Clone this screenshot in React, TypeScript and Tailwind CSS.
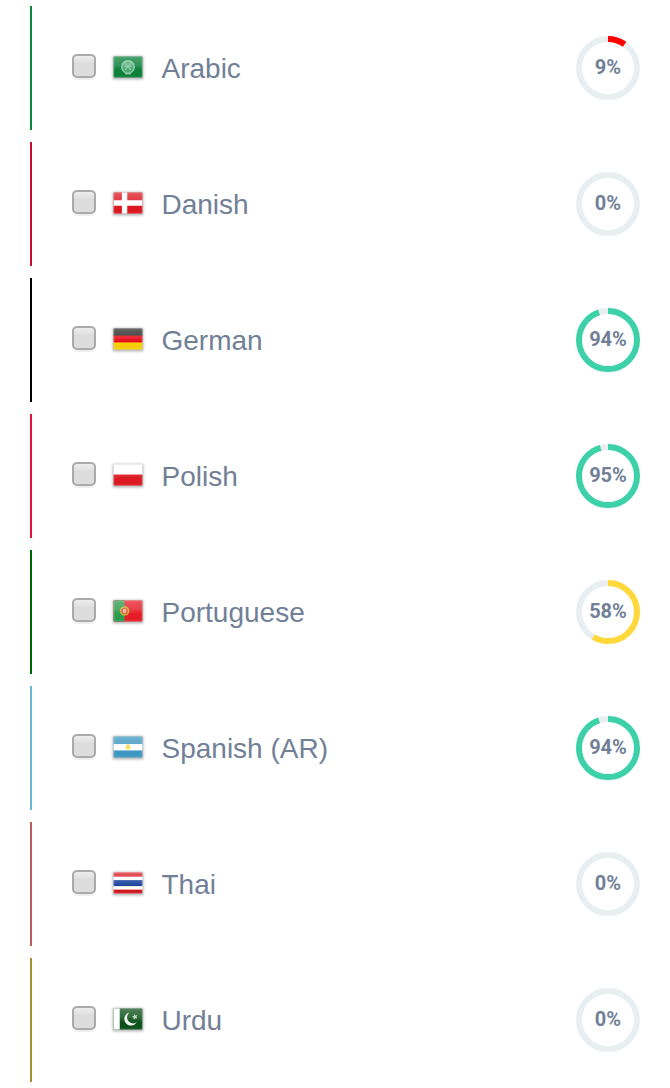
import type { ReactNode } from "react";

type Language = {
  name: string;
  percent: number;
  arc: number;
  border: string;
  stroke: string;
  flag: ReactNode;
};

const languages: Language[] = [
  {
    name: "Arabic", percent: 9, arc: 9.7, border: "border-[#078840]", stroke: "stroke-[#ff0000]",
    flag: (
      <>
        <rect width="30" height="22" fill="#0a803a" />
        <circle cx="15" cy="11" r="6.3" fill="#4ca872" stroke="#82c49a" strokeWidth="1.7" />
        <path d="M12 7l6 7M18 7l-6 7M12 10q3 2 6 0" fill="none" stroke="#8bc9a2" strokeWidth="1.1" />
        <path d="M12 18h6" stroke="#8fc9a4" strokeWidth="1.5" />
      </>
    ),
  },
  {
    name: "Danish", percent: 0, arc: 0, border: "border-[#c60c30]", stroke: "stroke-[#ff0000]",
    flag: (
      <>
        <rect width="30" height="22" fill="#dc1720" />
        <path d="M11.5 0v22M0 11h30" stroke="#fff" strokeWidth="5.5" />
      </>
    ),
  },
  {
    name: "German", percent: 94, arc: 95, border: "border-black", stroke: "stroke-[#3dd1aa]",
    flag: (
      <>
        <rect width="30" height="8" fill="#292929" />
        <rect y="7.5" width="30" height="7.5" fill="#e50712" />
        <rect y="14.5" width="30" height="7.5" fill="#f5ce08" />
      </>
    ),
  },
  {
    name: "Polish", percent: 95, arc: 95.9, border: "border-[#dc143c]", stroke: "stroke-[#3dd1aa]",
    flag: (
      <>
        <rect width="30" height="11" fill="#fff" />
        <rect y="10.5" width="30" height="11.5" fill="#dc1920" />
      </>
    ),
  },
  {
    name: "Portuguese", percent: 58, arc: 58.5, border: "border-[#006600]", stroke: "stroke-[#ffd93b]",
    flag: (
      <>
        <rect width="30" height="22" fill="#e61c26" />
        <rect width="11.5" height="22" fill="#2b9b4d" />
        <circle cx="11.5" cy="11" r="4.2" fill="#df5930" stroke="#c0ae35" strokeWidth="1.6" />
        <rect x="9.8" y="9" width="3.4" height="4.2" rx="1" fill="#f4a99a" />
      </>
    ),
  },
  {
    name: "Spanish (AR)", percent: 94, arc: 95, border: "border-[#6cb6d6]", stroke: "stroke-[#3dd1aa]",
    flag: (
      <>
        <rect width="30" height="22" fill="#3e98c2" />
        <rect y="8" width="30" height="6.5" fill="#fff" />
        <path d="M15 8v6M12 11h6M13 9l4 4M17 9l-4 4" stroke="#f9df58" strokeWidth="1.2" />
        <circle cx="15" cy="11" r="2" fill="#f8dc42" />
      </>
    ),
  },
  {
    name: "Thai", percent: 0, arc: 0, border: "border-[#b95d5d]", stroke: "stroke-[#ff0000]",
    flag: (
      <>
        <rect width="30" height="22" fill="#fff" />
        <rect width="30" height="4.5" fill="#dc1720" />
        <rect y="8" width="30" height="6.2" fill="#173f9c" />
        <rect y="17.8" width="30" height="4.2" fill="#cf1720" />
      </>
    ),
  },
  {
    name: "Urdu", percent: 0, arc: 0, border: "border-[#a5912b]", stroke: "stroke-[#ff0000]",
    flag: (
      <>
        <rect width="30" height="22" fill="#0c5119" />
        <rect width="6.5" height="22" fill="#fff" />
        <path d="M16.5 4.2A6.9 6.9 0 1 0 24.2 14.2A5.3 5.3 0 1 1 16.5 4.2Z" fill="#edf3ee" />
        <path d="M21.5 5.5l1 1.8 2.2-.5-1 2 1 1.8-2.2-.3-1.5 1.5-.2-2.2-1.9-.8 2-1Z" fill="#b5ceb9" />
      </>
    ),
  },
];

function Flag({ id, children }: { id: string; children: ReactNode }) {
  return (
    <svg viewBox="0 0 38 38" className="-mx-[3px] -mt-0.5 h-[38px] w-[38px] shrink-0">
      <defs>
        <linearGradient id={`${id}-gloss`} x2="0" y2="1">
          <stop offset="0" stopColor="#fff" stopOpacity=".26" />
          <stop offset=".4" stopColor="#fff" stopOpacity=".16" />
          <stop offset=".65" stopColor="#fff" stopOpacity="0" />
        </linearGradient>
        <clipPath id={`${id}-clip`}><rect width="30" height="22" rx="1.5" /></clipPath>
        <filter id={`${id}-soft`} x="-20%" y="-20%" width="140%" height="140%"><feGaussianBlur stdDeviation="1.3" /></filter>
        <filter id={`${id}-smooth`} x="-10%" y="-10%" width="120%" height="120%" colorInterpolationFilters="sRGB"><feGaussianBlur stdDeviation=".65" /></filter>
      </defs>
      <rect x="3.5" y="8" width="31" height="23.5" rx="1" fill="#000" opacity=".27" filter={`url(#${id}-soft)`} />
      <g transform="translate(4.4 8.3) scale(.973)" filter={`url(#${id}-smooth)`}>
        <g clipPath={`url(#${id}-clip)`}>
          {children}
          <rect width="30" height="22" fill={`url(#${id}-gloss)`} />
          <rect x=".8" y=".8" width="28.4" height="20.4" fill="none" stroke="#fff" strokeOpacity=".12" />
        </g>
      </g>
    </svg>
  );
}

function Progress({ value, arc, stroke }: { value: number; arc: number; stroke: string }) {
  return (
    <div className="grid h-16 w-16 place-items-center">
      <svg viewBox="0 0 64 64" className="col-start-1 row-start-1 h-16 w-16 -rotate-90" fill="none">
        <circle cx="32" cy="32" r="29" className="stroke-[#e9eff1]" strokeWidth="6" />
        {arc > 0 && (
          <circle cx="32" cy="32" r="29" pathLength="100" className={stroke} strokeWidth="6" strokeDasharray={`${arc} 100`} />
        )}
      </svg>
      <span className="col-start-1 row-start-1 -mt-0.5 font-[Roboto,sans-serif] text-xl leading-6 font-bold text-[#718096]">
        {value}%
      </span>
    </div>
  );
}

export default function App() {
  return (
    <main className="flex h-[1088px] w-[670px] flex-col gap-3 bg-white px-[30px] py-1.5">
      {languages.map(({ name, percent, arc, border, stroke, flag }) => (
        <div key={name} className={`flex h-[124px] shrink-0 items-center justify-between border-l-2 pl-10 ${border}`}>
          <label className="flex items-center">
            <input
              type="checkbox"
              className="-mt-1 mr-4 h-6 w-6 shrink-0 appearance-none rounded-[5px] border-2 border-[#aaaaaa] bg-linear-to-b from-[#ededed] to-[#dcdcdc] to-40% shadow-[0_2px_1px_#eeeeee]"
            />
            <Flag id={`flag-${name.slice(0, 3)}`}>{flag}</Flag>
            <span className="mt-0.5 ml-[17.5px] font-['Liberation_Sans',Arial,sans-serif] text-[28px] leading-[42px] text-[#718096]">{name}</span>
          </label>
          <Progress value={percent} arc={arc} stroke={stroke} />
        </div>
      ))}
    </main>
  );
}
